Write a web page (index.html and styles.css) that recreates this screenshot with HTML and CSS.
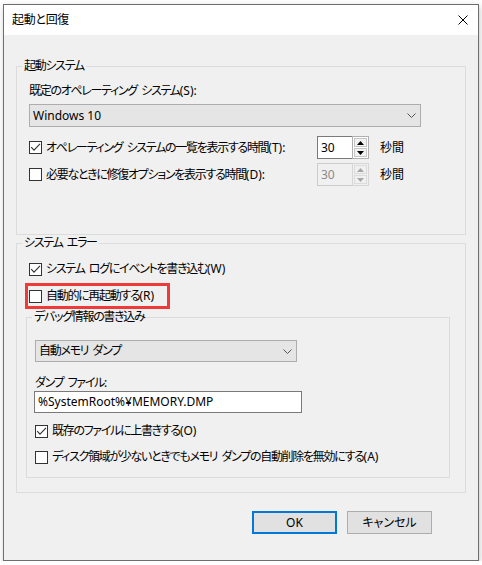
FILE: index.html
```html
<!DOCTYPE html>
<html lang="ja">
<head>
<meta charset="utf-8">
<title>起動と回復</title>
<link rel="stylesheet" href="styles.css">
</head>
<body>
<div class="window">
  <div class="titlebar">
    <span class="title">起動と回復</span>
    <svg class="close" width="10" height="10" viewBox="0 0 10 10"><path d="M0.5 0.5 L9.5 9.5 M9.5 0.5 L0.5 9.5" stroke="#000" stroke-width="1"/></svg>
  </div>
  <div class="win-body">
    <fieldset class="group">
      <legend>起動システム</legend>
      <div class="g1-body">
        <div class="label">既定のオペレーティング システム<span class="latin">(S):</span></div>
        <div class="select wide">
          <span class="latin">Windows 10</span>
          <svg width="9" height="5" viewBox="0 0 9 5"><polyline points="0.5,0.5 4.5,4.5 8.5,0.5" fill="none" stroke="#555" stroke-width="1"/></svg>
        </div>
        <div class="spin-row first">
          <div class="check">
            <span class="box"><svg width="11" height="11" viewBox="0 0 11 11"><polyline points="1.2,5.2 4,8.2 10,1.8" fill="none" stroke="#333" stroke-width="1.1"/></svg></span>
            <span>オペレーティング システムの一覧を表示する時間<span class="latin">(T):</span></span>
          </div>
          <div class="spin">
            <span class="spin-value latin">30</span>
            <span class="spin-btns">
              <span class="spin-btn"><svg width="7" height="4" viewBox="0 0 7 4"><polygon points="3.5,0 7,4 0,4" fill="#000"/></svg></span>
              <span class="spin-btn"><svg width="7" height="4" viewBox="0 0 7 4"><polygon points="0,0 7,0 3.5,4" fill="#000"/></svg></span>
            </span>
          </div>
          <span class="unit">秒間</span>
        </div>
        <div class="spin-row">
          <div class="check">
            <span class="box"></span>
            <span>必要なときに修復オプションを表示する時間<span class="latin">(D):</span></span>
          </div>
          <div class="spin disabled">
            <span class="spin-value latin">30</span>
            <span class="spin-btns">
              <span class="spin-btn"><svg width="7" height="4" viewBox="0 0 7 4"><polygon points="3.5,0 7,4 0,4" fill="#a6a6a6"/></svg></span>
              <span class="spin-btn"><svg width="7" height="4" viewBox="0 0 7 4"><polygon points="0,0 7,0 3.5,4" fill="#a6a6a6"/></svg></span>
            </span>
          </div>
          <span class="unit">秒間</span>
        </div>
      </div>
    </fieldset>

    <fieldset class="group g2">
      <legend>システム エラー</legend>
      <div class="g2-body">
        <div class="check row-w">
          <span class="box"><svg width="11" height="11" viewBox="0 0 11 11"><polyline points="1.2,5.2 4,8.2 10,1.8" fill="none" stroke="#333" stroke-width="1.1"/></svg></span>
          <span>システム ログにイベントを書き込む<span class="latin">(W)</span></span>
        </div>
        <div class="check red">
          <span class="box"></span>
          <span>自動的に再起動する<span class="latin">(R)</span></span>
        </div>
        <fieldset class="group g3">
          <legend>デバッグ情報の書き込み</legend>
          <div class="g3-body">
            <div class="select narrow">
              <span>自動メモリ ダンプ</span>
              <svg width="9" height="5" viewBox="0 0 9 5"><polyline points="0.5,0.5 4.5,4.5 8.5,0.5" fill="none" stroke="#555" stroke-width="1"/></svg>
            </div>
            <div class="label field-label">ダンプ ファイル<span class="latin">:</span></div>
            <div class="text-input latin">%SystemRoot%¥MEMORY.DMP</div>
            <div class="check row-o">
              <span class="box"><svg width="11" height="11" viewBox="0 0 11 11"><polyline points="1.2,5.2 4,8.2 10,1.8" fill="none" stroke="#333" stroke-width="1.1"/></svg></span>
              <span>既存のファイルに上書きする<span class="latin">(O)</span></span>
            </div>
            <div class="check row-a">
              <span class="box"></span>
              <span>ディスク領域が少ないときでもメモリ ダンプの自動削除を無効にする<span class="latin">(A)</span></span>
            </div>
          </div>
        </fieldset>
      </div>
    </fieldset>

    <div class="buttons">
      <button class="btn default latin">OK</button>
      <button class="btn">キャンセル</button>
    </div>
  </div>
</div>
</body>
</html>
```

FILE: styles.css
```css
html, body {
  margin: 0;
  padding: 0;
  background: #ffffff;
}

body {
  font-family: "Noto Sans", "Noto Sans CJK JP", sans-serif;
  font-size: 12px;
  line-height: 16px;
  color: #000;
  font-feature-settings: "palt";
  letter-spacing: -1.3px;
  word-spacing: 2.5px;
}

.latin {
  letter-spacing: 0;
  word-spacing: 0;
}

.window {
  margin: 4px 0 0 3px;
  width: 476px;
  height: 557px;
  box-sizing: border-box;
  border: 1px solid #6e6e6e;
  background: #f0f0f0;
  box-shadow: 1px 2px 6px rgba(0, 0, 0, 0.22);
  display: flex;
  flex-direction: column;
}

.titlebar {
  flex: none;
  height: 30px;
  background: #ffffff;
  display: flex;
  align-items: center;
  justify-content: space-between;
  padding: 0 10px 0 8px;
}

.title {
  letter-spacing: -0.3px;
}

.close {
  display: block;
}

.win-body {
  flex: 1;
  display: flex;
  flex-direction: column;
  padding: 23px 12px 14px 12px;
}

fieldset.group {
  margin: 0;
  padding: 0;
  border: 1px solid #dcdcdc;
  min-width: 0;
}

fieldset.group > legend {
  padding: 0 2px;
  margin-left: 5px;
  line-height: 16px;
}

.g1-body {
  padding: 9px 12px 48px 12px;
}

.label {
  height: 16px;
  white-space: nowrap;
}

.select {
  box-sizing: border-box;
  border: 1px solid #adadad;
  background: #e5e5e5;
  display: flex;
  align-items: center;
  justify-content: space-between;
  padding: 0 4px 0 3px;
  white-space: nowrap;
}

.select svg {
  display: block;
}

.select.wide {
  margin-top: 5px;
  width: 392px;
  height: 23px;
}

.select.narrow {
  width: 262px;
  height: 22px;
}

.check {
  display: flex;
  align-items: center;
  height: 16px;
  white-space: nowrap;
}

.box {
  flex: none;
  width: 13px;
  height: 13px;
  box-sizing: border-box;
  border: 1px solid #333;
  background: #fff;
  margin-right: 4px;
  display: flex;
  align-items: center;
  justify-content: center;
}

.box svg {
  display: block;
}

.spin-row {
  display: flex;
  align-items: center;
  height: 23px;
  margin-top: 4px;
}

.spin-row.first {
  margin-top: 9px;
}

.spin-row .check {
  width: 288px;
}

.spin {
  flex: none;
  display: flex;
  width: 52px;
  height: 23px;
}

.spin-value {
  width: 35px;
  box-sizing: border-box;
  border: 1px solid #7a7a7a;
  border-right: none;
  background: #fff;
  padding-left: 3px;
  display: flex;
  align-items: center;
}

.spin-btns {
  width: 17px;
  box-sizing: border-box;
  border: 1px solid #b0b0b0;
  background: #fff;
  padding: 1px;
  display: flex;
  flex-direction: column;
  gap: 1px;
}

.spin-btn {
  flex: 1;
  box-sizing: border-box;
  border: 1px solid #c6c6c6;
  background: #f2f2f2;
  display: flex;
  align-items: center;
  justify-content: center;
}

.spin-btn svg {
  display: block;
}

.spin.disabled .spin-value {
  background: #f0f0f0;
  border-color: #cccccc;
  color: #8a8a8a;
}

.spin.disabled .spin-btns {
  border-color: #d6d6d6;
  background: #f0f0f0;
}

.spin.disabled .spin-btn {
  border-color: #dcdcdc;
  background: #f0f0f0;
}

.unit {
  margin-left: 11px;
  letter-spacing: 0;
}

.g2 {
  margin-top: 8px;
}

.g2-body {
  padding: 10px 15px 14px 9px;
}

.row-w {
  margin-left: 3px;
}

.red {
  margin-top: 6px;
  margin-left: -1px;
  width: 145px;
  height: 26px;
  box-sizing: border-box;
  border: 3px solid #ef3a3a;
  padding-left: 1px;
}

.g3 {
  margin-top: 4px;
}

.g3-body {
  padding: 15px 8px 12px 8px;
}

.field-label {
  margin-top: 13px;
}

.text-input {
  width: 268px;
  height: 22px;
  box-sizing: border-box;
  margin-left: -1px;
  border: 1px solid #7a7a7a;
  background: #fff;
  padding-left: 3px;
  display: flex;
  align-items: center;
  white-space: nowrap;
}

.row-o {
  margin-top: 10px;
}

.row-a {
  margin-top: 10px;
}

.buttons {
  display: flex;
  justify-content: flex-end;
  gap: 10px;
  margin: 18px 34px 0 0;
}

.btn {
  width: 85px;
  height: 23px;
  box-sizing: border-box;
  margin: 0;
  padding: 0;
  border: 1px solid #adadad;
  background: #e1e1e1;
  font: inherit;
  color: #000;
  display: flex;
  align-items: center;
  justify-content: center;
}

.btn.default {
  border: 2px solid #0078d7;
}
```
